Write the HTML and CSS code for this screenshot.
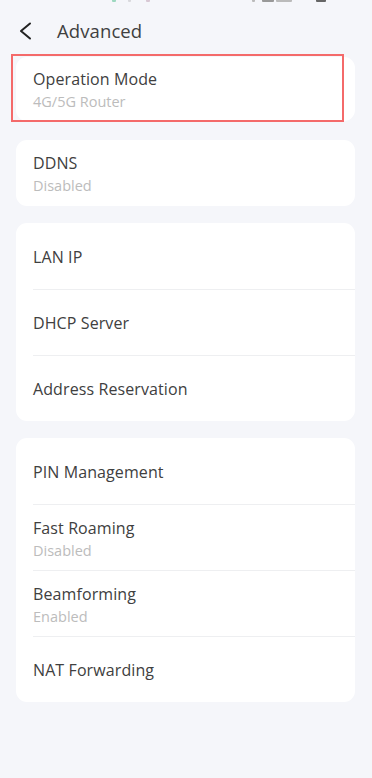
FILE: index.html
```html
<!DOCTYPE html>
<html lang="en">
<head>
<meta charset="utf-8">
<title>Advanced</title>
<link rel="stylesheet" href="styles.css">
</head>
<body>
<div class="status">
  <span class="st st-a"></span><span class="st st-b"></span><span class="st st-c"></span>
  <span class="st-right"><span class="st st-d"></span><span class="st st-e"></span><span class="st st-f"></span><span class="st st-g"></span></span>
</div>
<header class="header">
  <svg class="back" width="14" height="18" viewBox="0 0 14 18"><path d="M12 1.5 L3 9 L12 16.5" fill="none" stroke="#222" stroke-width="2" stroke-linecap="round" stroke-linejoin="round"/></svg>
  <h1 class="title">Advanced</h1>
</header>
<main class="content">
  <section class="card card-first">
    <div class="row row-two row-first">
      <div class="label">Operation Mode</div>
      <div class="value">4G/5G Router</div>
    </div>
    <div class="highlight"></div>
  </section>
  <section class="card">
    <div class="row row-two">
      <div class="label">DDNS</div>
      <div class="value">Disabled</div>
    </div>
  </section>
  <section class="card">
    <div class="row"><div class="label">LAN IP</div></div>
    <div class="row"><div class="label">DHCP Server</div></div>
    <div class="row"><div class="label">Address Reservation</div></div>
  </section>
  <section class="card">
    <div class="row"><div class="label">PIN Management</div></div>
    <div class="row row-two"><div class="label">Fast Roaming</div><div class="value">Disabled</div></div>
    <div class="row row-two"><div class="label">Beamforming</div><div class="value">Enabled</div></div>
    <div class="row"><div class="label">NAT Forwarding</div></div>
  </section>
</main>
</body>
</html>
```
FILE: styles.css
```css
html, body {
  margin: 0;
  padding: 0;
}
body {
  background: #f5f6fa;
  font-family: "Open Sans", Lato, "Liberation Sans", sans-serif;
  color: #333;
  width: 372px;
  min-height: 778px;
}
.status {
  height: 4px;
  position: relative;
  overflow: hidden;
}
.st {
  position: absolute;
  top: 0;
  height: 2px;
  border-radius: 0 0 1px 1px;
}
.st-a { left: 112px; width: 4px; background: #9ed8c0; }
.st-b { left: 128px; width: 3px; background: #d9d9dd; }
.st-c { left: 146px; width: 4px; background: #d8c8d4; }
.st-d { left: 252px; width: 3px; background: #bbb; }
.st-e { left: 262px; width: 12px; background: #999; }
.st-f { left: 276px; width: 16px; background: #bbb; }
.st-g { left: 316px; width: 10px; background: #666; }
.header {
  height: 53px;
  display: flex;
  align-items: center;
  padding-left: 18px;
  box-sizing: border-box;
}
.back {
  display: block;
  margin-top: 1px;
}
.title {
  margin: 0 0 0 25px;
  font-size: 18.5px;
  font-weight: 400;
  color: #404040;
  letter-spacing: 0.1px;
}
.content {
  display: flex;
  flex-direction: column;
  gap: 17px;
  padding: 0 17px 0 16px;
}
.card {
  background: #fff;
  border-radius: 11px;
  position: relative;
}
.card-first {
  margin-bottom: 2px;
}
.row {
  height: 66px;
  margin-left: 17px;
  display: flex;
  flex-direction: column;
  justify-content: center;
  border-top: 1px solid #eeeff1;
  box-sizing: border-box;
  padding-top: 2px;
}
.row:first-child {
  border-top: none;
}
.row-two {
  padding-top: 3px;
}
.row-first {
  height: 64px;
}
.label {
  font-size: 16px;
  line-height: 21px;
  color: #404040;
  letter-spacing: 0.1px;
}
.value {
  font-size: 14.5px;
  line-height: 20px;
  color: #bcbcbc;
  margin-top: 2px;
}
.highlight {
  position: absolute;
  left: -5px;
  top: -3px;
  width: 333px;
  height: 68px;
  border: 2px solid #f46a6a;
  box-sizing: border-box;
  pointer-events: none;
}
```
